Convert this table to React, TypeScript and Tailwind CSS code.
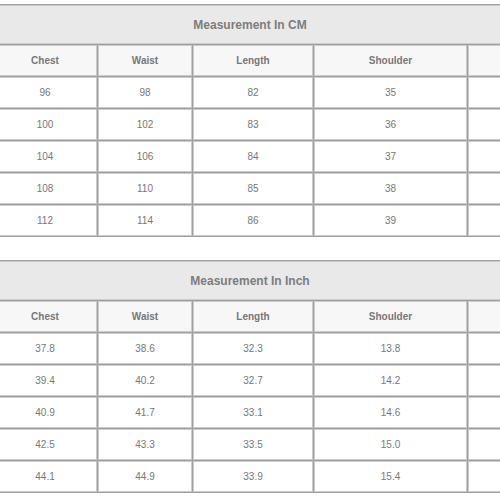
const cm = [
  ["96", "98", "82", "35"],
  ["100", "102", "83", "36"],
  ["104", "106", "84", "37"],
  ["108", "110", "85", "38"],
  ["112", "114", "86", "39"],
]

const inch = [
  ["37.8", "38.6", "32.3", "13.8"],
  ["39.4", "40.2", "32.7", "14.2"],
  ["40.9", "41.7", "33.1", "14.6"],
  ["42.5", "43.3", "33.5", "15.0"],
  ["44.1", "44.9", "33.9", "15.4"],
]

const heads = ["Chest", "Waist", "Length", "Shoulder", ""]

function SizeTable({ title, rows }: { title: string; rows: string[][] }) {
  return (
    <div className="w-[516px] -ml-[8px] grid grid-cols-[104px_94px_120px_153px_39px] gap-px border border-[#9f9f9f] bg-[#9f9f9f]">
      <div className="col-span-5 h-[39px] flex items-center justify-center border border-[#cbcbcb] bg-[#e9e9e9] text-[12px] font-bold text-[#7d7d7d] font-['Liberation_Sans',Arial,sans-serif]">
        {title}
      </div>
      {heads.map((h, i) => (
        <div
          key={"h" + i}
          className="h-[31px] flex items-center justify-center border border-[#cbcbcb] bg-[#f7f7f7] text-[10px] font-bold text-[#777] font-['Liberation_Sans',Arial,sans-serif]"
        >
          {h}
        </div>
      ))}
      {rows.map((r, ri) =>
        [...r, ""].map((v, ci) => (
          <div
            key={ri + "-" + ci}
            className="h-[31px] flex items-center justify-center border border-[#cbcbcb] bg-white text-[10px] text-[#777] font-['Liberation_Sans',Arial,sans-serif]"
          >
            {v}
          </div>
        ))
      )}
    </div>
  )
}

export default function App() {
  return (
    <div className="w-[500px] h-[500px] overflow-hidden bg-white pt-[4px]">
      <SizeTable title="Measurement In CM" rows={cm} />
      <div className="h-[23px]" />
      <SizeTable title="Measurement In Inch" rows={inch} />
    </div>
  )
}
